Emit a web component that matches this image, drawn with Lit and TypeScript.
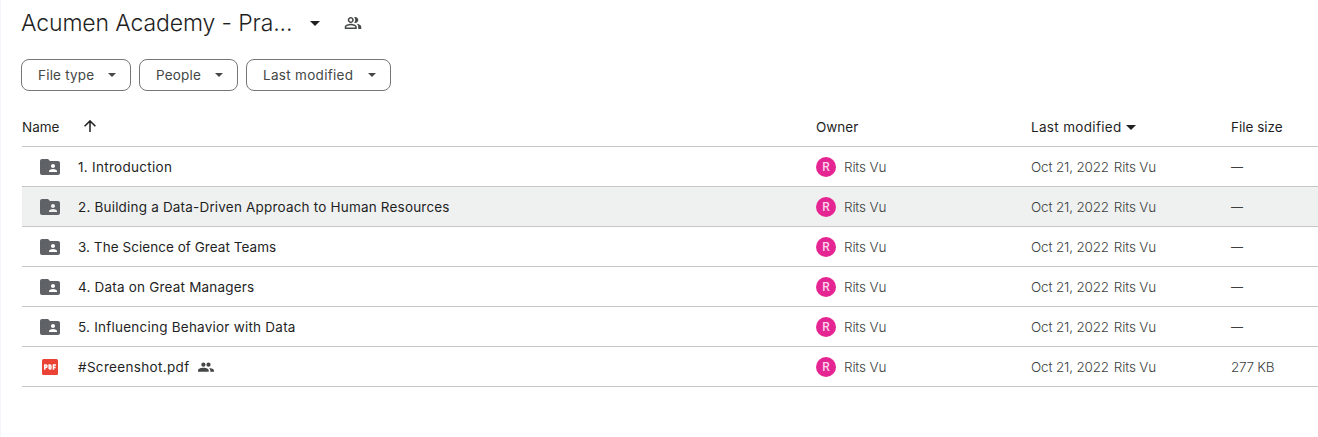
import { LitElement, html, css, nothing } from "lit";
import { customElement } from "lit/decorators.js";
import { classMap } from "lit/directives/class-map.js";
import { styleMap } from "lit/directives/style-map.js";

interface Entry {
  name: string;
  tracking: number;
  pdf?: boolean;
  active?: boolean;
  size: string;
}

const entries: Entry[] = [
  { name: "1. Introduction", tracking: 0.29, size: "—" },
  { name: "2. Building a Data-Driven Approach to Human Resources", tracking: 0.19, size: "—", active: true },
  { name: "3. The Science of Great Teams", tracking: 0.05, size: "—" },
  { name: "4. Data on Great Managers", tracking: 0.2, size: "—" },
  { name: "5. Influencing Behavior with Data", tracking: 0.23, size: "—" },
  { name: "#Screenshot.pdf", tracking: 0.33, size: "277 KB", pdf: true },
];

const caret = html`<svg class="caret" width="10" height="5" viewBox="0 0 10 5"><path d="M0 0h10L5 5z" /></svg>`;

const folderIcon = html`<svg width="24" height="24" viewBox="0 0 24 24">
  <path fill="#5f6368" d="M20 6h-8l-2-2H4c-1.1 0-1.99.9-1.99 2L2 18c0 1.1.9 2 2 2h16c1.1 0 2-.9 2-2V8c0-1.1-.9-2-2-2zm-5 3c1.1 0 2 .9 2 2s-.9 2-2 2-2-.9-2-2 .9-2 2-2zm4 8h-8v-1c0-1.33 2.67-2 4-2s4 .67 4 2v1z" />
</svg>`;

const pdfIcon = html`<svg width="16" height="16" viewBox="0 0 16 16">
  <rect width="16" height="16" rx="1.5" fill="#ea4335" />
  <path fill="none" stroke="#fff" stroke-width="1.5" d="M2.75 10.8V6.05h1.2a1 1 0 0 1 1 1v.5a1 1 0 0 1-1 1h-1.2M7.15 10.05v-4h.7a1.1 1.1 0 0 1 1.1 1.1v1.8a1.1 1.1 0 0 1-1.1 1.1h-.7M11.45 10.8V6.05h2.6M11.45 8.4h2.2" />
</svg>`;

const peopleIcon = html`<svg class="people" width="18" height="18" viewBox="0 0 24 24">
  <path d="M16.67 13.13C18.04 14.06 19 15.32 19 17v3h4v-3c0-2.18-3.57-3.47-6.33-3.87zM15 12c2.21 0 4-1.79 4-4s-1.79-4-4-4c-.47 0-.91.1-1.33.24C14.5 5.27 15 6.58 15 8s-.5 2.73-1.33 3.76c.42.14.86.24 1.33.24zM9 12c2.21 0 4-1.79 4-4s-1.79-4-4-4-4 1.79-4 4 1.79 4 4 4zm0-6c1.1 0 2 .9 2 2s-.9 2-2 2-2-.9-2-2 .9-2 2-2zM9 13c-2.67 0-8 1.34-8 4v3h16v-3c0-2.66-5.33-4-8-4zm6 5H3v-.99C3.2 16.29 6.3 15 9 15s5.8 1.29 6 2v1z" />
</svg>`;

const sharedIcon = html`<svg class="shared" width="16" height="16" viewBox="0 0 16 16">
  <circle cx="5.4" cy="5.7" r="2.1" /><circle cx="10.5" cy="5.7" r="2.1" />
  <path d="M0 12.7v-1.2c0-1.9 3-2.7 5.4-2.7s5.3.8 5.3 2.7v1.2zM11 8.9c2.4.1 5 .9 5 2.6v1.2h-3.7v-1.2c0-1.1-.4-1.9-1.3-2.6z" />
</svg>`;

const sortArrow = html`<svg class="arrow" width="12" height="12" viewBox="0 0 12 12">
  <path fill="none" stroke="#1f1f1f" stroke-width="1.5" d="M6 12V1M.6 6.2 6 .9l5.4 5.3" />
</svg>`;

@customElement("app-root")
export class AppRoot extends LitElement {
  static styles = css`
    :host { display: block; box-sizing: border-box; height: 437px; overflow: hidden; background: #fff; border-left: 1px solid #f5f6fc; font: 400 13.5px/20px Inter, "Open Sans", sans-serif; color: #1f1f1f; }
    svg { display: block; flex: none; fill: currentColor; }
    .title { display: flex; align-items: center; height: 46px; padding-left: 20px; white-space: nowrap; }
    h1 { margin: 0; width: 289px; font-size: 23px; line-height: 32px; font-weight: 300; letter-spacing: -0.12px; }
    .people { margin-left: 24px; color: #444746; }
    .filters { display: flex; gap: 8px; padding: 13px 0 0 20px; }
    .chip { display: flex; align-items: center; justify-content: space-between; box-sizing: border-box; height: 32px; padding: 0 14px 0 16px; border: 1px solid #747775; border-radius: 8px; background: none; color: #444746; font: inherit; letter-spacing: 0.2px; }
    .chip .caret { width: 8px; height: 4px; }
    .type { width: 110px; } .who { width: 99px; } .date { width: 145px; letter-spacing: 0.3px; }
    .table { margin: 16px 0 0 21px; }
    .row { display: grid; grid-template-columns: 794px 215px 200px 1fr; align-items: center; box-sizing: border-box; height: 40px; border-bottom: 1px solid #c7c7c7; white-space: nowrap; }
    .active { background: #eff1f1; }
    .row > div { display: flex; align-items: center; }
    .arrow { margin: 0 0 2px 25px; }
    .modified { letter-spacing: 0.32px; }
    .modified .caret { margin: 1px 0 0 4px; }
    .icon { display: flex; justify-content: center; width: 56px; }
    .shared { margin-left: 8px; color: #444746; }
    .row > .cell { color: #3c3f3e; font-weight: 300; letter-spacing: -0.18px; }
    .row > .size { letter-spacing: -0.3px; }
    .row > .empty { font-size: 12px; font-weight: 400; }
    .avatar { display: flex; align-items: center; justify-content: center; width: 20px; height: 20px; margin-right: 8px; border-radius: 50%; background: #e52592; color: #fbd0e8; font: 500 12px/20px Roboto, sans-serif; letter-spacing: 0; }
    .by { margin-left: 5px; }
  `;

  private chip(label: string, kind: string) {
    return html`<button class="chip ${kind}"><span>${label}</span>${caret}</button>`;
  }

  private row(e: Entry) {
    return html`<div class=${classMap({ row: true, active: !!e.active })}>
      <div><span class="icon">${e.pdf ? pdfIcon : folderIcon}</span><span style=${styleMap({ letterSpacing: `${e.tracking}px` })}>${e.name}</span>${e.pdf ? sharedIcon : nothing}</div>
      <div class="cell"><span class="avatar">R</span><span>Rits Vu</span></div>
      <div class="cell"><span>Oct 21, 2022</span><span class="by">Rits Vu</span></div>
      <div class=${classMap({ cell: true, size: true, empty: !e.pdf })}>${e.size}</div>
    </div>`;
  }

  render() {
    return html`
      <header class="title"><h1>Acumen Academy - Pra...</h1>${caret}${peopleIcon}</header>
      <div class="filters">${this.chip("File type", "type")}${this.chip("People", "who")}${this.chip("Last modified", "date")}</div>
      <main class="table">
        <div class="row"><div>Name${sortArrow}</div><div>Owner</div><div class="modified">Last modified${caret}</div><div>File size</div></div>
        ${entries.map((e) => this.row(e))}
      </main>`;
  }
}
